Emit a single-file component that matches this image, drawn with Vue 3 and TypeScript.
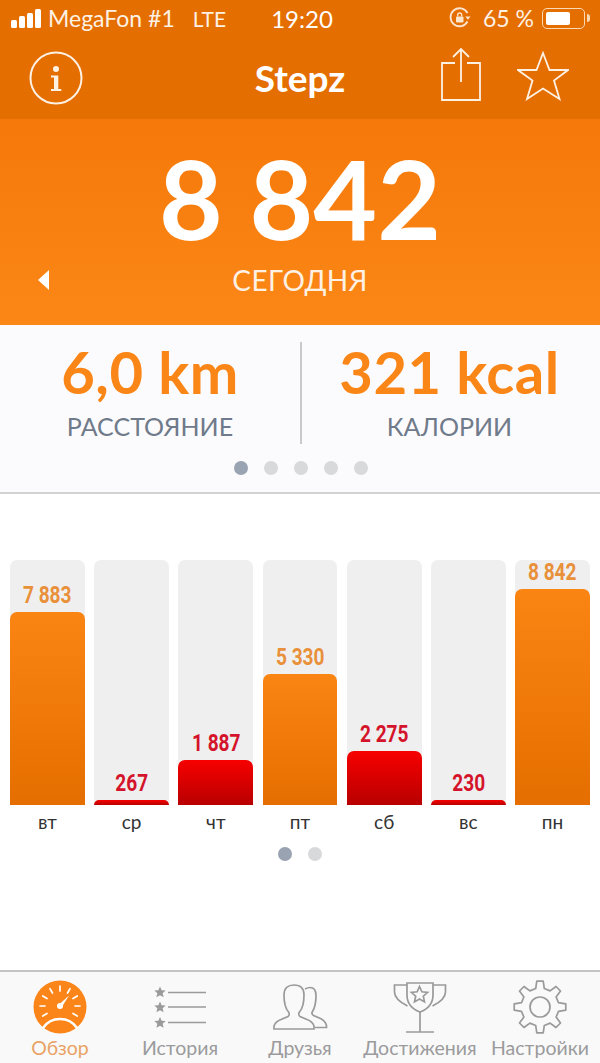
<template>
  <div class="screen">
    <header class="top">
      <div class="status">
        <div class="status-left">
          <span class="signal"><i v-for="h in signalBars" :key="h" :style="{ height: h + 'px' }"></i></span>
          <span class="carrier">MegaFon #1</span>
          <span class="net">LTE</span>
        </div>
        <span class="clock">19:20</span>
        <div class="status-right">
          <svg class="lock" width="24" height="24" viewBox="0 0 24 24" fill="none" stroke="#fbe6d0" stroke-width="1.8">
            <path d="M19.5 15.5A9 9 0 1 1 19.5 7" />
            <path d="M22.5 10.5l-2.6 3.2-2.6-3.2z" fill="#fbe6d0" stroke="none" />
            <rect x="8" y="10.5" width="7.5" height="6" rx="1" fill="#fbe6d0" stroke="none" />
            <path d="M9.7 10.5V9a2 2 0 0 1 4 0v1.5" stroke-width="1.3" />
          </svg>
          <span class="percent">65 %</span>
          <span class="battery"><b></b></span>
          <span class="battery-tip"></span>
        </div>
      </div>
      <div class="nav">
        <svg class="nav-info" width="54" height="54" viewBox="0 0 54 54" fill="none">
          <circle cx="27" cy="27" r="25.5" stroke="#fdf1e4" stroke-width="2" />
          <circle cx="27" cy="18" r="3" fill="#fdf1e4" />
          <path d="M22 24.5h7.300v13.500h3v2H22v-2h3V26.500h-3z" fill="#fdf1e4" />
        </svg>
        <h1 class="title">Stepz</h1>
        <div class="nav-actions">
          <svg width="42" height="54" viewBox="0 0 42 54" fill="none" stroke="#fdf1e4" stroke-width="1.8">
            <path d="M15 16H2v37h38V16H27" />
            <path d="M21 35V2M13 10l8-8 8 8" />
          </svg>
          <svg width="52" height="50" viewBox="0 0 52 50" fill="none" stroke="#fdf1e4" stroke-width="1.8">
            <path d="M26 2l6.500 17H51L37 29.500 42.500 48 26 37.500 10 48l5.500-18.500L1 19h18.500z" />
          </svg>
        </div>
      </div>
    </header>

    <section class="hero">
      <div class="steps">8 842</div>
      <div class="today">
        <svg class="back" width="12" height="20" viewBox="0 0 12 20"><path d="M11 0v20L0 10z" fill="#fff" /></svg>
        <span>СЕГОДНЯ</span>
      </div>
    </section>

    <section class="stats">
      <div class="stat-row">
        <div class="stat">
          <div class="stat-value">6,0 km</div>
          <div class="stat-label">РАССТОЯНИЕ</div>
        </div>
        <div class="stat-line"></div>
        <div class="stat stat-right">
          <div class="stat-value">321 kcal</div>
          <div class="stat-label">КАЛОРИИ</div>
        </div>
      </div>
      <div class="dots stat-dots">
        <i v-for="n in 5" :key="n" :class="{ on: n === 1 }"></i>
      </div>
    </section>

    <main class="chart">
      <div class="bars">
        <div v-for="d in days" :key="d.name" class="col">
          <div class="track">
            <span class="amount" :class="{ low: d.low }">{{ d.value }}</span>
            <div class="fill" :class="{ low: d.low }" :style="{ height: d.height + 'px' }"></div>
          </div>
          <span class="day">{{ d.name }}</span>
        </div>
      </div>
      <div class="dots chart-dots">
        <i class="on"></i>
        <i></i>
      </div>
    </main>

    <nav class="tabs">
      <div class="tab active">
        <svg width="54" height="54" viewBox="0 0 54 54">
          <circle cx="27" cy="27" r="26.5" fill="#fb8518" />
          <g stroke="#fff" stroke-width="1.7" stroke-linecap="round" fill="none">
            <path d="M27 6v5M37 8.700l-2.500 4.300M17 8.700l2.500 4.300M44.300 16L40 18.500M9.700 16l4.300 2.500M47 26h-5M7 26h5M44.300 36L40 33.500M9.700 36l4.300-2.500" />
            <path d="M10 48c4-6 10-9 17-9s13 3 17 9" stroke-width="2.6" />
          </g>
          <path d="M25.500 25L36 15.500 28.500 27.500z" fill="#fff" />
          <circle cx="27" cy="26" r="3" fill="#fff" />
        </svg>
        <span>Обзор</span>
      </div>
      <div class="tab">
        <svg width="54" height="54" viewBox="0 0 54 54">
          <g fill="#9a9a9a">
            <path v-for="y in [12, 27, 42.5]" :key="y" :transform="`translate(7 ${y})`" d="M0-5.500l1.600 3.800 4.100.3-3.100 2.700 1 4L0 3.200l-3.600 2.100 1-4-3.100-2.700 4.100-.3z" />
          </g>
          <path d="M15 12.500h38M15 27h38M15 42.500h38" stroke="#9a9a9a" stroke-width="1.5" />
        </svg>
        <span>История</span>
      </div>
      <div class="tab">
        <svg width="56" height="54" viewBox="0 0 56 54" fill="none" stroke="#9a9a9a" stroke-width="1.7">
          <path d="M2 49v-3c1-3 3-5 7-6.500l7-3c1.500-1 1.500-3 .5-4.500C13 28 12 22 12 15c0-7 4-10 10-10s10 3 10 10c0 7-1 13-4.500 17-1 1.500-1 3.500.5 4.500l7 3c4 1.500 6 3.500 7 6.500v3z" />
          <path d="M33 9c2-1 3-1.500 5-1.500 4 0 6 3 6 8 0 7-1 12-3.500 16-1 1.500-.5 3 1 4l7 3c3 1.500 5 3 6 7v2H43" />
        </svg>
        <span>Друзья</span>
      </div>
      <div class="tab">
        <svg width="54" height="54" viewBox="0 0 54 54" fill="none" stroke="#9a9a9a" stroke-width="1.7">
          <path d="M14 3h26v12c0 9-5 14-13 17-8-3-13-8-13-17z" />
          <path d="M14 5H1.500v7c0 6 5 10 13 14M40 5h12.500v7c0 6-5 10-13 14" />
          <path d="M27 32v20M13 52h28" />
          <path d="M26.500 6.500l2.400 5.300 5.700.6-4.300 3.800 1.200 5.700-5-2.900-5 2.900 1.200-5.700-4.300-3.800 5.700-.6z" />
        </svg>
        <span>Достижения</span>
      </div>
      <div class="tab">
        <svg width="54" height="54" viewBox="0 0 54 54" fill="none" stroke="#9a9a9a" stroke-width="1.7" stroke-linejoin="round">
          <circle cx="27" cy="27" r="10" />
          <path :d="gearPath" />
        </svg>
        <span>Настройки</span>
      </div>
    </nav>
  </div>
</template>

<script setup lang="ts">
interface Day {
  name: string;
  value: string;
  height: number;
  low: boolean;
}

const signalBars = [8, 12, 15, 19];

const days: Day[] = [
  { name: "вт", value: "7 883", height: 193, low: false },
  { name: "ср", value: "267", height: 5, low: true },
  { name: "чт", value: "1 887", height: 45, low: true },
  { name: "пт", value: "5 330", height: 131, low: false },
  { name: "сб", value: "2 275", height: 54, low: true },
  { name: "вс", value: "230", height: 5, low: true },
  { name: "пн", value: "8 842", height: 218, low: false },
];

// шестерёнка: 8 зубьев, первый смотрит вверх
const gearPoint = (r: number, deg: number) => {
  const a = (deg * Math.PI) / 180;
  return `${(27 + r * Math.sin(a)).toFixed(1)} ${(27 - r * Math.cos(a)).toFixed(1)}`;
};

const gearPath =
  "M" +
  Array.from({ length: 8 }, (_, i) => {
    const a = i * 45;
    return [
      gearPoint(19, a - 13),
      gearPoint(26, a - 7),
      gearPoint(26, a + 7),
      gearPoint(19, a + 13),
    ].join(" L");
  }).join(" L") +
  "z";
</script>

<style>
body {
  background: #fff;
}
</style>

<style scoped>
.screen {
  width: 600px;
  height: 1063px;
  display: flex;
  flex-direction: column;
  overflow: hidden;
  background: #fff;
  font-family: Lato, "Noto Sans", sans-serif;
}

.top {
  height: 119px;
  background: #e56e00;
  color: #fdf1e4;
}

.status {
  height: 36px;
  padding: 0 10px 0 11px;
  display: flex;
  align-items: center;
  justify-content: space-between;
  font-size: 23px;
}

.status-left,
.status-right {
  width: 220px;
  display: flex;
  align-items: center;
}

.status-right {
  justify-content: flex-end;
}

.signal {
  display: flex;
  align-items: flex-end;
  gap: 2px;
  margin-right: 7px;
}

.signal i {
  width: 6px;
  background: #fff;
  border-radius: 1.5px;
}

.net {
  margin-left: 18px;
  font-size: 21px;
}

.clock {
  margin-left: 3px;
  color: #fff;
  font-size: 24px;
}

.lock {
  margin-right: 11px;
}

.percent {
  margin-right: 8px;
}

.battery {
  width: 43px;
  height: 21px;
  padding: 3px;
  border: 1px solid #fbd9b5;
  border-radius: 5px;
  box-sizing: border-box;
}

.battery b {
  display: block;
  width: 24px;
  height: 100%;
  background: #fff;
  border-radius: 2px;
}

.battery-tip {
  width: 3px;
  height: 8px;
  margin-left: 2px;
  background: #fbd9b5;
  border-radius: 0 3px 3px 0;
}

.nav {
  height: 83px;
  padding: 0 31px 0 29px;
  display: flex;
  align-items: center;
  justify-content: space-between;
  position: relative;
}

.title {
  margin: 0;
  position: absolute;
  left: 0;
  right: 0;
  text-align: center;
  color: #fff;
  font-size: 37px;
  font-weight: 700;
}

.nav-actions {
  display: flex;
  align-items: flex-end;
  gap: 35px;
  margin-bottom: 7px;
}

.hero {
  height: 206px;
  background: linear-gradient(#f5790a, #fb8716);
  color: #fff;
  text-align: center;
}

.steps {
  margin-top: 18px;
  font-size: 110px;
  line-height: 120px;
  font-weight: 700;
}

.today {
  margin-top: 7px;
  position: relative;
  font-size: 28px;
  line-height: 32px;
  letter-spacing: 0.4px;
  color: #fdf1e4;
}

.back {
  position: absolute;
  left: 38px;
  top: 6px;
}

.stats {
  height: 167px;
  background: #fbfbfd;
  border-bottom: 2px solid #d3d3d5;
  box-sizing: content-box;
}

.stat-row {
  height: 102px;
  margin-top: 17px;
  display: grid;
  grid-template-columns: 300px 2px 1fr;
}

.stat {
  text-align: center;
}

.stat-right {
  padding-right: 3px;
}

.stat-line {
  background: #c9c9cb;
}

.stat-value {
  color: #fa8618;
  font-size: 58px;
  line-height: 60px;
  font-weight: 700;
  letter-spacing: 0.5px;
}

.stat-label {
  margin-top: 8px;
  color: #6f7a8a;
  font-size: 25px;
  line-height: 32px;
}

.dots {
  display: flex;
  justify-content: center;
  gap: 16px;
}

.stat-dots {
  margin: 17px 0 0 2px;
}

.dots i {
  width: 14px;
  height: 14px;
  border-radius: 50%;
  background: #d8d9db;
}

.dots i.on {
  background: #9aa3b2;
}

.chart {
  flex: 1;
  padding: 66px 10px 0;
}

.bars {
  display: grid;
  grid-template-columns: repeat(7, 1fr);
  column-gap: 9.3px;
}

.col {
  display: flex;
  flex-direction: column;
  align-items: center;
}

.track {
  width: 100%;
  height: 245px;
  display: flex;
  flex-direction: column;
  justify-content: flex-end;
  align-items: center;
  background: #efeff0;
  border-radius: 7px 7px 0 0;
}

.amount {
  color: #e9903a;
  font-family: Roboto, "Liberation Sans", sans-serif;
  font-size: 23px;
  line-height: 26px;
  margin-bottom: 3px;
  font-weight: 700;
  transform: scaleX(0.83);
  white-space: nowrap;
}

.amount.low {
  color: #d4142a;
}

.fill {
  width: 100%;
  border-radius: 7px 7px 0 0;
  background: linear-gradient(#fb8513, #e56e00);
}

.fill.low {
  background: linear-gradient(#f70000, #b80000);
}

.day {
  margin-top: 6px;
  color: #333;
  font-size: 19px;
  line-height: 22px;
}

.chart-dots {
  margin: 14px 0 0;
}

.tabs {
  height: 91px;
  display: grid;
  grid-template-columns: repeat(5, 1fr);
  background: #f9f9f9;
  border-top: 2px solid #c4c4c6;
}

.tab {
  padding-top: 8px;
  display: flex;
  flex-direction: column;
  align-items: center;
  color: #9b9b9d;
  font-size: 19.5px;
  line-height: 24px;
  white-space: nowrap;
}

.tab span {
  margin-top: 2px;
}

.tab.active {
  color: #e9a264;
}
</style>
